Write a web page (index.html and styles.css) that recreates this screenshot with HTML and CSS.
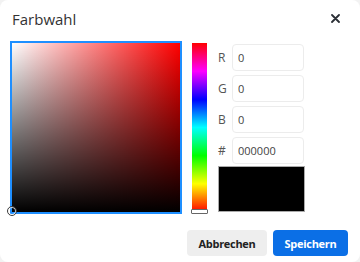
FILE: index.html
```html
<!DOCTYPE html>
<html lang="de">
<head>
<meta charset="utf-8">
<title>Farbwahl</title>
<link rel="stylesheet" href="styles.css">
</head>
<body>
<div class="dialog">
  <div class="header">
    <div class="title">Farbwahl</div>
    <button class="close" aria-label="Schließen">
      <svg width="9" height="9" viewBox="0 0 9 9"><path d="M1 1L8 8M8 1L1 8" stroke="#2b2f36" stroke-width="1.8" stroke-linecap="round"/></svg>
    </button>
  </div>
  <div class="main">
    <div class="sv">
      <div class="sv-handle"></div>
    </div>
    <div class="hue">
      <div class="hue-handle"></div>
    </div>
    <div class="fields">
      <div class="row"><span class="lbl">R</span><input class="inp" value="0"></div>
      <div class="row"><span class="lbl">G</span><input class="inp" value="0"></div>
      <div class="row"><span class="lbl">B</span><input class="inp" value="0"></div>
      <div class="row"><span class="lbl">#</span><input class="inp" value="000000"></div>
      <div class="preview"></div>
    </div>
  </div>
  <div class="footer">
    <button class="btn btn-cancel">Abbrechen</button>
    <button class="btn btn-save">Speichern</button>
  </div>
</div>
</body>
</html>
```
FILE: styles.css
```css
* { box-sizing: border-box; }
html, body { margin: 0; padding: 0; }
body {
  background: #f2f2f2;
  font-family: "Open Sans", "Noto Sans", sans-serif;
}
.dialog {
  width: 360px;
  height: 262px;
  background: #fff;
  border-radius: 8px;
  overflow: hidden;
}
.header {
  height: 41px;
  display: flex;
  justify-content: space-between;
  align-items: flex-start;
  padding: 8px 0 0 12px;
}
.title {
  font-size: 15px;
  line-height: 22px;
  color: #333;
}
.close {
  border: 0;
  background: none;
  padding: 0;
  margin: 6px 20px 0 0;
  width: 9px;
  height: 9px;
  display: flex;
}
.main {
  display: flex;
  align-items: flex-start;
  padding-left: 10px;
}
.sv {
  position: relative;
  width: 172px;
  height: 173px;
  border: 2px solid #1e8fff;
  background:
    linear-gradient(to top, #000, rgba(0,0,0,0)),
    linear-gradient(to right, #fff, #f00);
}
.sv-handle {
  position: absolute;
  left: -5px;
  bottom: -4px;
  width: 10px;
  height: 10px;
  border-radius: 50%;
  border: 1px solid #3a3a3a;
  box-shadow: inset 0 0 0 1px rgba(255,255,255,0.8);
}
.hue {
  position: relative;
  width: 15px;
  height: 169px;
  margin: 2px 0 0 10px;
  background: linear-gradient(to bottom, #f00 0%, #f0f 16.66%, #00f 33.33%, #0ff 50%, #0f0 66.66%, #ff0 83.33%, #f00 100%);
}
.hue-handle {
  position: absolute;
  left: -1px;
  bottom: -2px;
  width: 17px;
  height: 5px;
  background: #fff;
  border: 1px solid #666;
  border-radius: 1px;
}
.fields {
  margin: 3px 0 0 11px;
  width: 87px;
  display: flex;
  flex-direction: column;
  gap: 4px;
}
.row {
  display: flex;
  align-items: center;
}
.lbl {
  width: 14px;
  font-size: 12px;
  color: #555;
}
.inp {
  width: 72px;
  height: 27px;
  border: 1px solid #ececec;
  border-radius: 4px;
  padding: 0 5px;
  font-family: "Open Sans", "Noto Sans", sans-serif;
  font-size: 11px;
  color: #444;
  outline: none;
}
.preview {
  margin-top: -2px;
  height: 46px;
  width: 87px;
  background: #000;
  border: 1px solid #aaa;
}
.footer {
  display: flex;
  justify-content: flex-end;
  gap: 6px;
  padding-right: 12px;
  margin-top: 16px;
}
.btn {
  height: 26px;
  border: 0;
  border-radius: 4px;
  padding: 0;
  font-family: "Open Sans", "Noto Sans", sans-serif;
  font-weight: 700;
  font-size: 11px;
  letter-spacing: -0.3px;
}
.btn-cancel {
  width: 80px;
  background: #eeeeee;
  color: #222;
}
.btn-save {
  width: 75px;
  background: #0b6fe6;
  color: #fff;
}
```
